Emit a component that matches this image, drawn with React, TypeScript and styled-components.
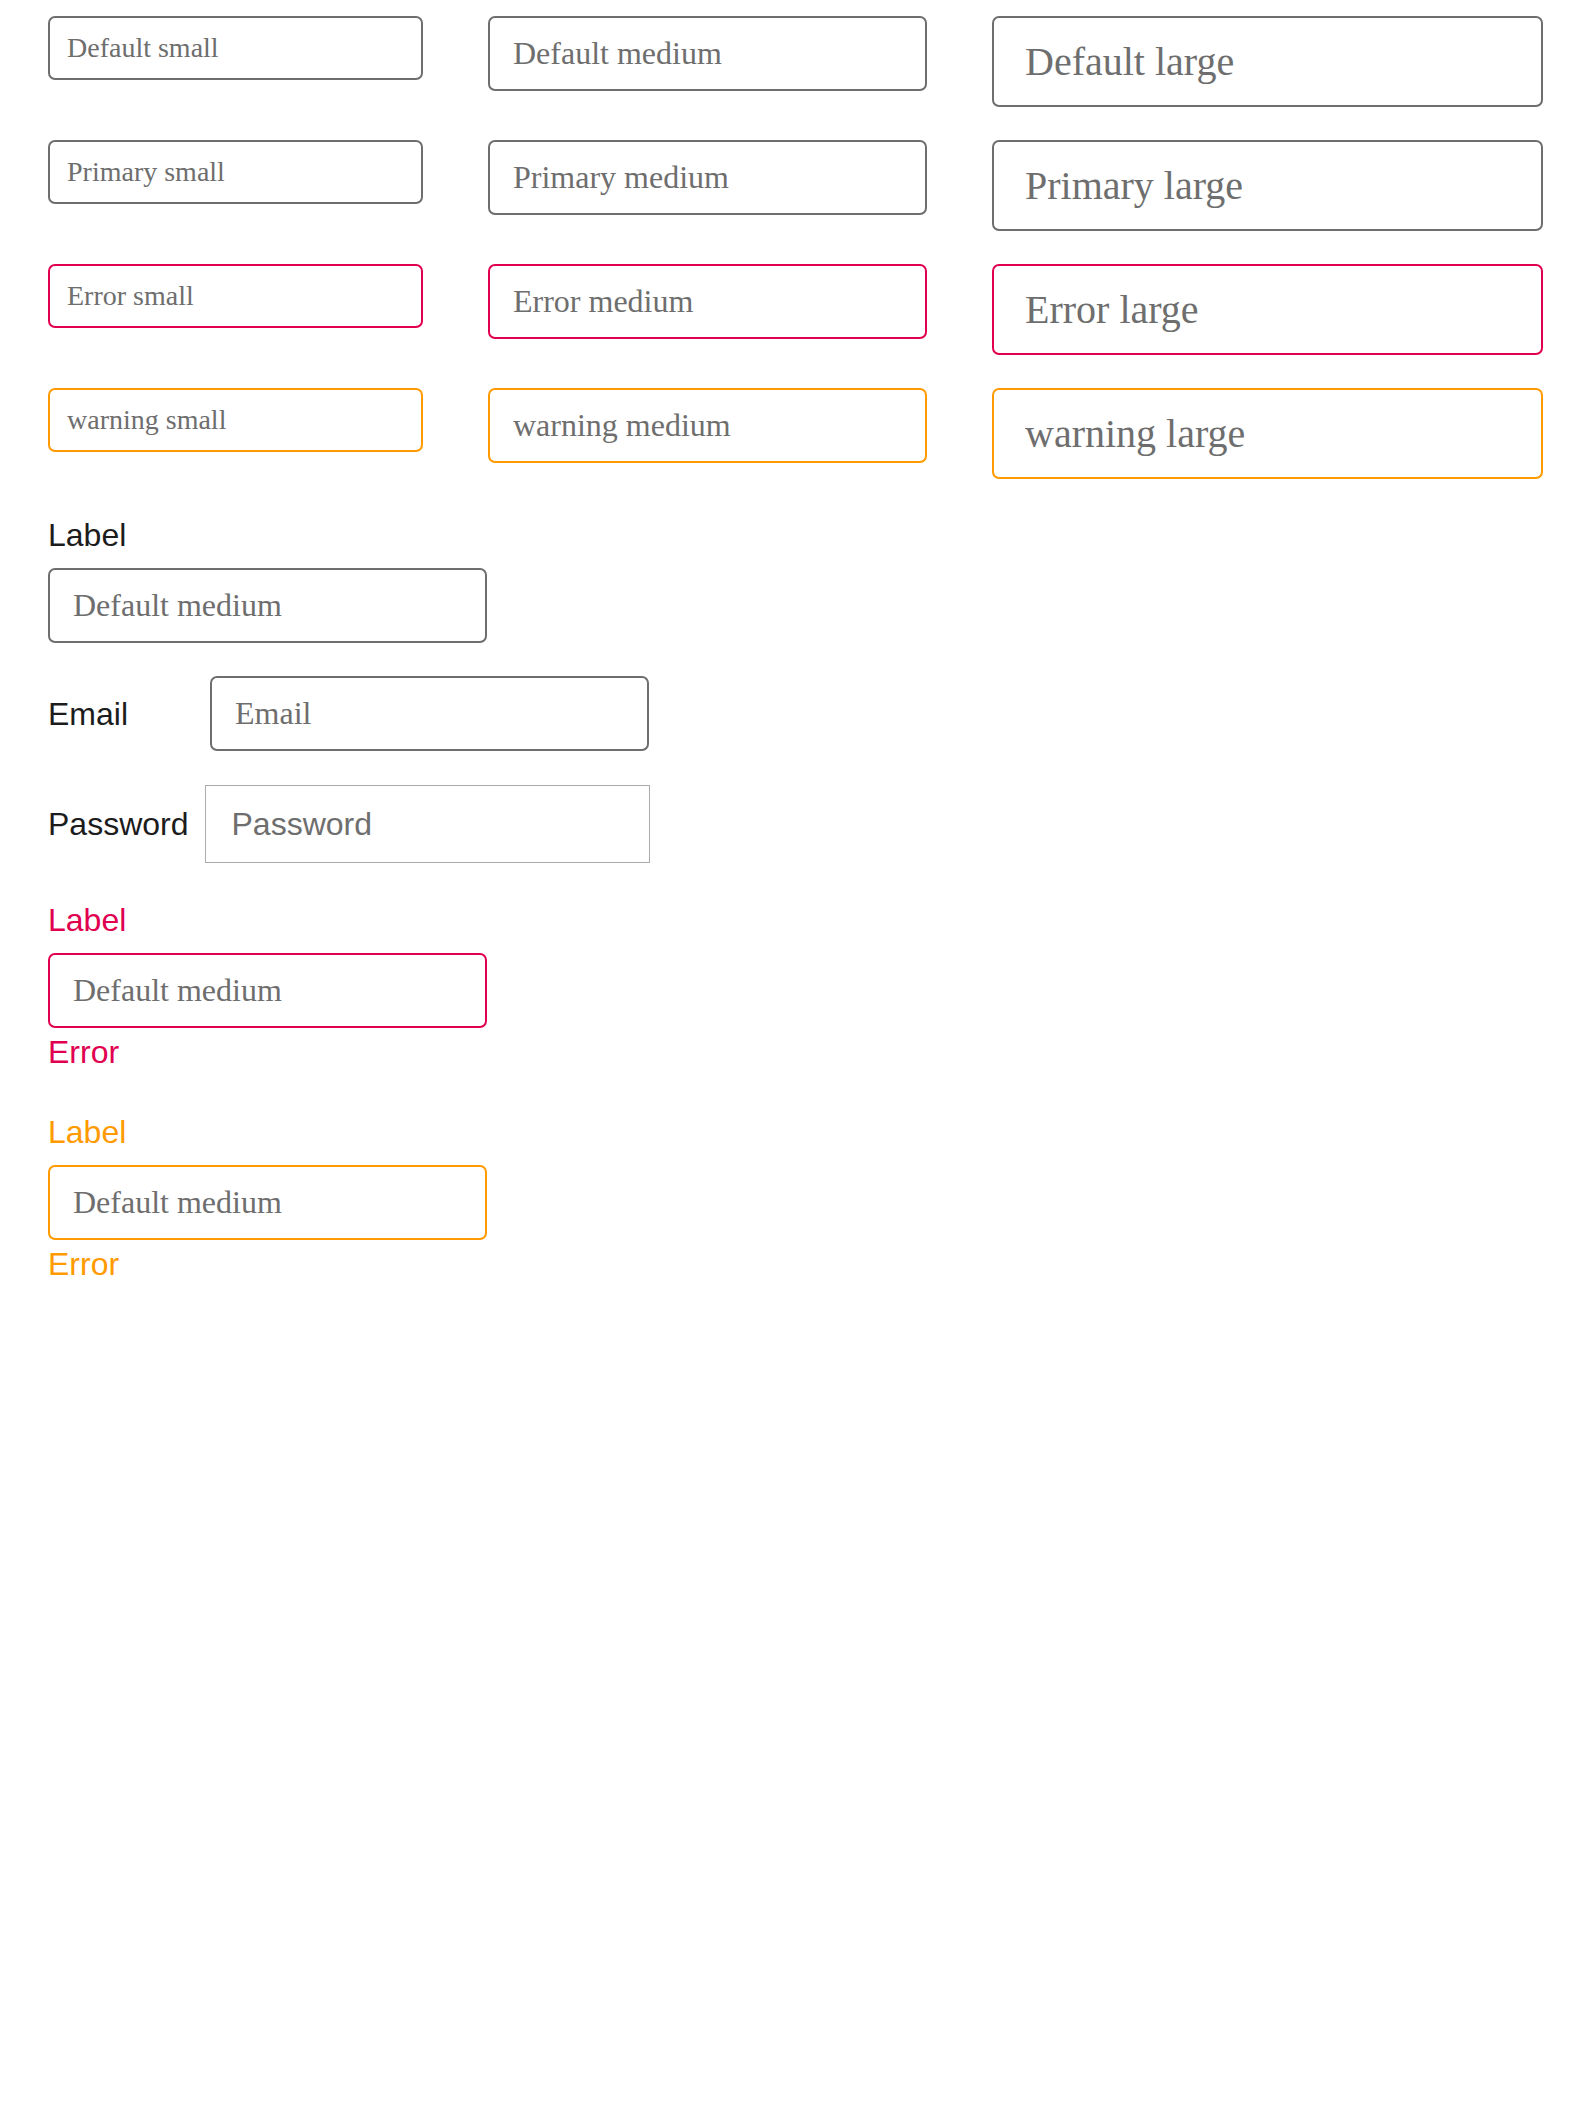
import React from "react";
import styled, { createGlobalStyle, css } from "styled-components";

const GlobalStyle = createGlobalStyle`
  html, body { margin: 0; padding: 0; background: #ffffff; }
  body { font-family: "Liberation Sans", Arial, sans-serif; }
`;

type Size = "small" | "medium" | "large";
type Tone = "default" | "primary" | "error" | "warning";

const toneColor: Record<Tone, string> = {
  default: "#6e6e6e",
  primary: "#6e6e6e",
  error: "#e0004f",
  warning: "#ff9a00",
};

const sizes: Record<Size, { w: number; h: number; fs: number; px: number }> = {
  small: { w: 375, h: 64, fs: 28, px: 17 },
  medium: { w: 439, h: 75, fs: 32, px: 23 },
  large: { w: 551, h: 91, fs: 40, px: 31 },
};

const Page = styled.main`
  padding: 16px 48px 40px;
  display: flex;
  flex-direction: column;
`;

const Grid = styled.section`
  display: flex;
  flex-direction: column;
  gap: 33px;
`;

const Row = styled.div`
  display: flex;
  align-items: flex-start;
  gap: 65px;
`;

const TextInput = styled.input<{ $size: Size; $tone: Tone }>`
  box-sizing: border-box;
  display: block;
  margin: 0;
  font-family: "Liberation Serif", "Times New Roman", serif;
  color: #6e6e6e;
  background: #ffffff;
  border: 2px solid ${(p) => toneColor[p.$tone]};
  border-radius: 7px;
  outline: none;
  ${(p) => {
    const s = sizes[p.$size];
    return css`
      width: ${s.w}px;
      height: ${s.h}px;
      font-size: ${s.fs}px;
      padding: 0 ${s.px}px;
    `;
  }}
  &::placeholder {
    color: #6e6e6e;
    opacity: 1;
  }
`;

const PlainInput = styled.input`
  box-sizing: border-box;
  display: block;
  margin: 0;
  width: 445px;
  height: 78px;
  padding: 0 26px;
  font-family: "Liberation Sans", Arial, sans-serif;
  font-size: 32px;
  color: #6e6e6e;
  background: #ffffff;
  border: 1px solid #ababab;
  border-radius: 0;
  outline: none;
  &::placeholder {
    color: #6e6e6e;
    opacity: 1;
  }
`;

const Field = styled.div<{ $top: number }>`
  display: flex;
  flex-direction: column;
  align-items: flex-start;
  margin-top: ${(p) => p.$top}px;
`;

const InlineField = styled.div<{ $top: number }>`
  display: flex;
  align-items: center;
  gap: 16px;
  margin-top: ${(p) => p.$top}px;
`;

const Label = styled.label<{ $tone: Tone; $minWidth?: number; $inline?: boolean }>`
  display: block;
  font-family: "Liberation Sans", Arial, sans-serif;
  font-size: 32px;
  line-height: 36px;
  color: ${(p) =>
    p.$tone === "error" ? "#e0004f" : p.$tone === "warning" ? "#ff9a00" : "#1c1c1c"};
  margin-bottom: ${(p) => (p.$inline ? 0 : 15)}px;
  min-width: ${(p) => p.$minWidth ?? 0}px;
`;

const Message = styled.span<{ $tone: Tone }>`
  display: block;
  margin-top: 6px;
  font-family: "Liberation Sans", Arial, sans-serif;
  font-size: 32px;
  line-height: 36px;
  color: ${(p) => (p.$tone === "error" ? "#e0004f" : "#ff9a00")};
`;

const rows: { tone: Tone; name: string }[] = [
  { tone: "default", name: "Default" },
  { tone: "primary", name: "Primary" },
  { tone: "error", name: "Error" },
  { tone: "warning", name: "warning" },
];

const sizeList: Size[] = ["small", "medium", "large"];

export default function App() {
  return (
    <>
      <GlobalStyle />
      <Page>
        <Grid>
          {rows.map((r) => (
            <Row key={r.name}>
              {sizeList.map((s) => (
                <TextInput key={s} $size={s} $tone={r.tone} placeholder={`${r.name} ${s}`} />
              ))}
            </Row>
          ))}
        </Grid>

        <Field $top={38}>
          <Label $tone="default" htmlFor="f-label">Label</Label>
          <TextInput id="f-label" $size="medium" $tone="default" placeholder="Default medium" />
        </Field>

        <InlineField $top={33}>
          <Label $tone="default" $inline $minWidth={146} htmlFor="f-email">Email</Label>
          <TextInput id="f-email" type="email" $size="medium" $tone="default" placeholder="Email" />
        </InlineField>

        <InlineField $top={34}>
          <Label $tone="default" $inline htmlFor="f-pass">Password</Label>
          <PlainInput id="f-pass" type="password" placeholder="Password" />
        </InlineField>

        <Field $top={39}>
          <Label $tone="error" htmlFor="f-err">Label</Label>
          <TextInput id="f-err" $size="medium" $tone="error" placeholder="Default medium" />
          <Message $tone="error">Error</Message>
        </Field>

        <Field $top={44}>
          <Label $tone="warning" htmlFor="f-warn">Label</Label>
          <TextInput id="f-warn" $size="medium" $tone="warning" placeholder="Default medium" />
          <Message $tone="warning">Error</Message>
        </Field>
      </Page>
    </>
  );
}
